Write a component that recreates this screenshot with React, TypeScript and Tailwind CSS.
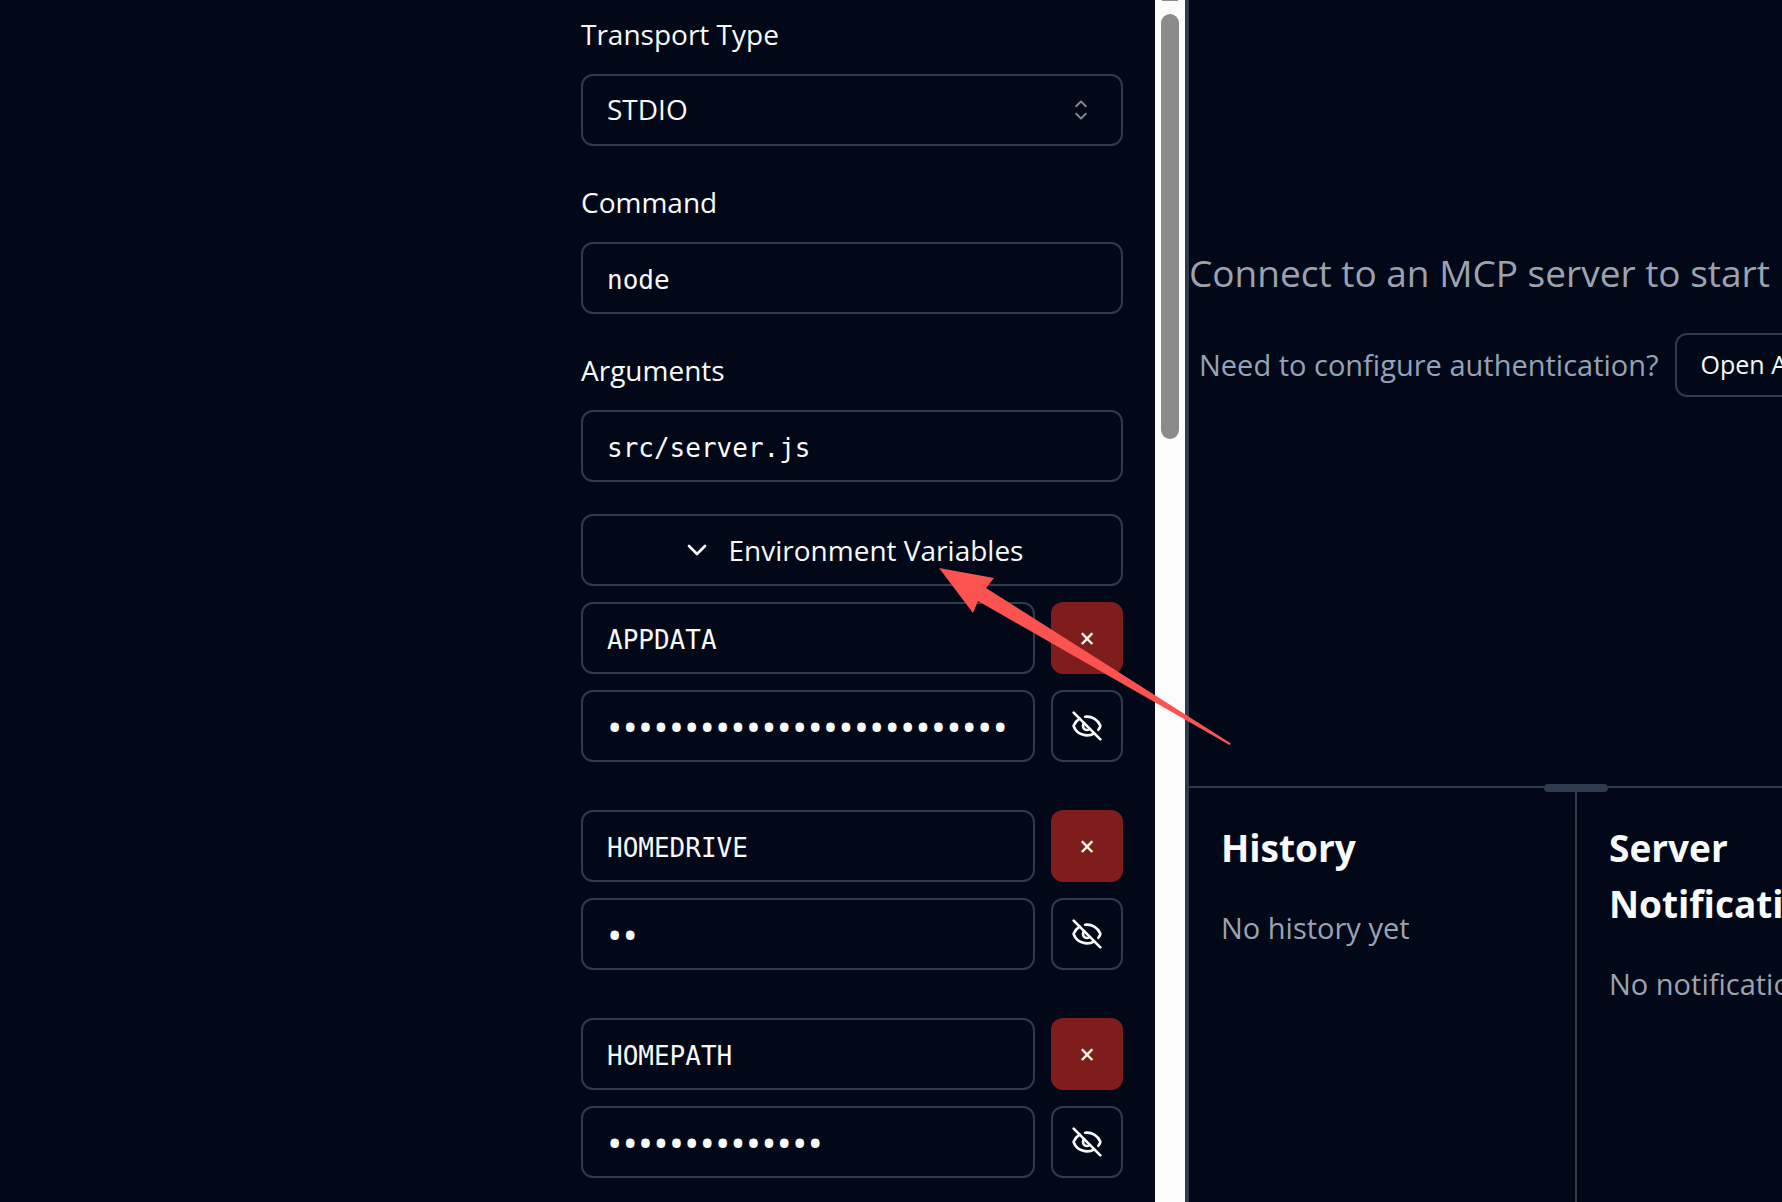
import { useState } from 'react'
import { ChevronDown, EyeOff } from 'lucide-react'

const initialEnv = [
    { name: 'APPDATA', value: 'C:\\Users\\x\\AppData\\Roaming' },
    { name: 'HOMEDRIVE', value: 'C:' },
    { name: 'HOMEPATH', value: '\\Users\\gateway' },
]

const fieldClass = "h-[72px] w-full min-w-0 rounded-xl border-2 border-[#2f3b4d] bg-transparent px-6 outline-none"
const monoClass = "font-['DejaVu_Sans_Mono',monospace] text-[26px]"

function UpDownIcon() {
    return (
        <svg className="pointer-events-none absolute right-[26px] top-5 size-8 text-[#858a93]" viewBox="0 0 15 15" fill="currentColor" aria-hidden="true">
            <path fillRule="evenodd" clipRule="evenodd" d="M4.93179 5.43179C4.75605 5.60753 4.75605 5.89245 4.93179 6.06819C5.10753 6.24392 5.39245 6.24392 5.56819 6.06819L7.49999 4.13638L9.43179 6.06819C9.60753 6.24392 9.89245 6.24392 10.0682 6.06819C10.2439 5.89245 10.2439 5.60753 10.0682 5.43179L7.81819 3.18179C7.73379 3.0974 7.61933 3.04999 7.49999 3.04999C7.38064 3.04999 7.26618 3.0974 7.18179 3.18179L4.93179 5.43179ZM10.0682 9.56819C10.2439 9.39245 10.2439 9.10753 10.0682 8.93179C9.89245 8.75605 9.60753 8.75605 9.43179 8.93179L7.49999 10.8636L5.56819 8.93179C5.39245 8.75605 5.10753 8.75605 4.93179 8.93179C4.75605 9.10753 4.75605 9.39245 4.93179 9.56819L7.18179 11.8182C7.35753 11.9939 7.64245 11.9939 7.81819 11.8182L10.0682 9.56819Z" />
        </svg>
    )
}

function TextField({ id, label, value, onChange }) {
    return (
        <div className="flex flex-col gap-4">
            <label htmlFor={id} className="font-medium leading-[48px]">{label}</label>
            <input id={id} type="text" value={value} onChange={(e) => onChange(e.target.value)} className={`${fieldClass} ${monoClass} pt-1`} />
        </div>
    )
}

function EnvRow({ name, value, onName, onValue, onRemove }) {
    const [visible, setVisible] = useState(false)

    return (
        <div className="flex flex-col gap-4 pb-8">
            <div className="flex gap-4">
                <input type="text" aria-label="Key" value={name} onChange={(e) => onName(e.target.value)} className={`${fieldClass} ${monoClass} pt-1`} />
                <button type="button" onClick={onRemove} className={`size-[72px] shrink-0 rounded-xl bg-[#7f1d1d] ${monoClass}`}>×</button>
            </div>
            <div className="flex gap-4">
                <input
                    type={visible ? 'text' : 'password'}
                    aria-label="Value"
                    value={value}
                    onChange={(e) => onValue(e.target.value)}
                    className={`${fieldClass} ${visible ? monoClass : "text-[41px]"}`}
                />
                <button type="button" aria-label="Toggle value" onClick={() => setVisible(!visible)} className="flex size-[72px] shrink-0 items-center justify-center rounded-xl border-2 border-[#2f3b4d]">
                    <EyeOff className="size-8" />
                </button>
            </div>
        </div>
    )
}

function Sidebar() {
    const [transport, setTransport] = useState('stdio')
    const [command, setCommand] = useState('node')
    const [args, setArgs] = useState('src/server.js')
    const [open, setOpen] = useState(true)
    const [env, setEnv] = useState(initialEnv)

    const update = (index, patch) => setEnv(env.map((item, i) => (i === index ? { ...item, ...patch } : item)))

    return (
        <aside className="flex h-full overflow-hidden border-r-4 border-[#2f3b4d]">
            <form className="flex min-w-0 flex-1 flex-col gap-8 px-8 pt-[10px]">
                <div className="flex flex-col gap-4">
                    <label htmlFor="transport" className="font-medium leading-[48px]">Transport Type</label>
                    <div className="relative">
                        <select id="transport" value={transport} onChange={(e) => setTransport(e.target.value)} className={`${fieldClass} appearance-none pb-0.5 font-medium`}>
                            <option value="stdio">STDIO</option>
                            <option value="sse">SSE</option>
                        </select>
                        <UpDownIcon />
                    </div>
                </div>
                <TextField id="command" label="Command" value={command} onChange={setCommand} />
                <TextField id="arguments" label="Arguments" value={args} onChange={setArgs} />
                <div className="flex flex-col gap-4">
                    <button type="button" onClick={() => setOpen(!open)} className="flex h-[72px] items-center justify-center gap-4 rounded-xl border-2 border-[#2f3b4d] font-medium">
                        <ChevronDown className="size-8" />
                        Environment Variables
                    </button>
                    {open && env.map((item, index) => (
                        <EnvRow
                            key={index}
                            name={item.name}
                            value={item.value}
                            onName={(name) => update(index, { name })}
                            onValue={(value) => update(index, { value })}
                            onRemove={() => setEnv(env.filter((_, i) => i !== index))}
                        />
                    ))}
                </div>
            </form>
            <div className="flex w-[30px] shrink-0 flex-col items-center bg-[#fcfcfc]">
                <div className="h-px w-4 bg-[#8b8b8b]"></div>
                <div className="mt-[13px] h-[425px] w-[18px] rounded-full bg-[#8b8b8b]"></div>
            </div>
        </aside>
    )
}

function Panel({ title, children }) {
    return (
        <section className="min-w-0 p-8">
            <h2 className="mb-8 text-[37px] font-bold leading-[56px]">{title}</h2>
            <p className="whitespace-nowrap leading-10 text-[#9ca3af]">{children}</p>
        </section>
    )
}

function Content() {
    return (
        <main className="flex h-full min-w-0 flex-col overflow-hidden text-[29px]">
            <div className="flex min-h-0 flex-1 flex-col gap-8 whitespace-nowrap pt-[245px]">
                <p className="text-[37px] leading-[56px] text-[#9ca3af]">Connect to an MCP server to start inspecting</p>
                <div className="flex items-center gap-4 pl-[10px]">
                    <p className="text-[#94a3b8]">Need to configure authentication?</p>
                    <button type="button" className="h-16 shrink-0 rounded-xl border-2 border-[#2f3b4d] px-6 text-[25px] font-medium">Open Auth Settings</button>
                </div>
            </div>
            <div className="relative grid h-[416px] shrink-0 grid-cols-[386px_386px] border-t-2 border-[#2f3b4d]">
                <div className="absolute -top-1 left-[355px] h-2 w-16 rounded-full bg-[#2f3b4d]"></div>
                <Panel title="History">No history yet</Panel>
                <div className="border-l-2 border-[#2f3b4d]">
                    <Panel title="Server Notifications">No notifications yet</Panel>
                </div>
            </div>
        </main>
    )
}

export default function App() {
    return (
        <div className="relative grid h-screen grid-cols-[549fr_640px_593fr] overflow-hidden bg-[#020817] font-['Open_Sans',sans-serif] text-[28px] text-[#f8fafc]">
            <div></div>
            <Sidebar />
            <Content />
            <svg className="pointer-events-none absolute left-[938px] top-[567px]" width="294" height="180" viewBox="938 567 294 180" fill="#fc5350" aria-hidden="true">
                <path d="M939 568L994 578L986 588L1231 743.5L1229.5 745L978 601L973 613Z" />
            </svg>
        </div>
    )
}
